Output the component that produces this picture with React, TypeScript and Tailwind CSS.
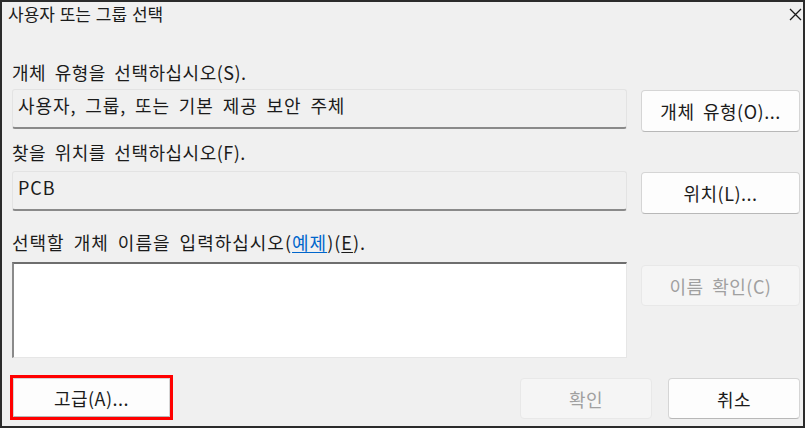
import React from 'react'

const font = { fontFamily: '"Noto Sans CJK KR", "Noto Sans", sans-serif' }

function DialogButton({ label, disabled, className = '' }: { label: React.ReactNode; disabled?: boolean; className?: string }) {
  return (
    <button
      className={
        'flex items-center justify-center rounded-[4px] text-[18px] leading-[24px] tracking-[0.5px] [word-spacing:4px] ' +
        (disabled
          ? 'bg-[#f5f5f5] border border-[#e8e8e8] text-[#a0a0a0]'
          : 'bg-[#fdfdfd] border border-[#d5d5d5] border-b-[#b8b8b8] text-[#1b1b1b]') +
        ' ' +
        className
      }
    >
      {label}
    </button>
  )
}

function ReadonlyField({ value }: { value: string }) {
  return (
    <div className="h-[40px] w-[615px] rounded-[3px] border border-[#e3e3e3] border-b-2 border-b-[#8a8a8a] bg-[#f0f0f0] pl-[5px] pt-[3px] text-[18px] leading-[24px] tracking-[0.9px] [word-spacing:4px] text-[#1b1b1b]">
      {value}
    </div>
  )
}

export default function App() {
  return (
    <div
      className="flex h-[428px] w-[805px] flex-col overflow-hidden border-2 border-[#2b2b2b] bg-[#f0f0f0] text-[#1b1b1b]"
      style={font}
    >
      {/* Title bar */}
      <div className="flex h-[58px] items-start justify-between pl-[6px] pr-[1px]">
        <span className="text-[17px] leading-[24px] [word-spacing:1px]">사용자 또는 그룹 선택</span>
        <svg className="mt-[6px]" width="13" height="13" viewBox="0 0 13 13">
          <path d="M1 1 L12 12 M12 1 L1 12" stroke="#1b1b1b" strokeWidth="1.3" fill="none" />
        </svg>
      </div>

      <div className="flex flex-col pl-[10px] pr-[3px] text-[18px] leading-[24px] tracking-[0.5px] [word-spacing:4px]">
        {/* Object type */}
        <div>개체 유형을 선택하십시오(S).</div>
        <div className="mt-[5px] flex items-start gap-[14px]">
          <ReadonlyField value="사용자, 그룹, 또는 기본 제공 보안 주체" />
          <DialogButton label="개체 유형(O)..." className="mt-[1px] h-[42px] w-[159px]" />
        </div>

        {/* Location */}
        <div className="mt-[8px]">찾을 위치를 선택하십시오(F).</div>
        <div className="mt-[7px] flex items-start gap-[14px]">
          <ReadonlyField value="PCB" />
          <DialogButton label="위치(L)..." className="mt-[1px] h-[42px] w-[159px]" />
        </div>

        {/* Object names */}
        <div className="mt-[16px] tracking-[1px]">
          선택할 개체 이름을 입력하십시오(
          <span className="text-[#0066cc] underline underline-offset-2">예제</span>)(<span className="underline underline-offset-2">E</span>).
        </div>
        <div className="mt-[8px] flex items-start gap-[14px]">
          <div className="h-[96px] w-[615px] border-l-2 border-t-2 border-r border-b border-l-[#8a8a8a] border-t-[#6e6e6e] border-r-[#e6e6e6] border-b-[#e6e6e6] bg-white" />
          <DialogButton label="이름 확인(C)" disabled className="mt-[3px] h-[41px] w-[159px]" />
        </div>

        {/* Bottom buttons */}
        <div className="mt-[20px] flex items-start">
          <DialogButton
            label="고급(A)..."
            className="ml-[1px] h-[39px] w-[157px] rounded-none outline-[3px] outline-solid outline-[#ff0000]"
          />
          <DialogButton label="확인" disabled className="ml-auto h-[41px] w-[132px]" />
          <DialogButton label="취소" className="ml-[16px] h-[41px] w-[132px]" />
        </div>
      </div>
    </div>
  )
}
